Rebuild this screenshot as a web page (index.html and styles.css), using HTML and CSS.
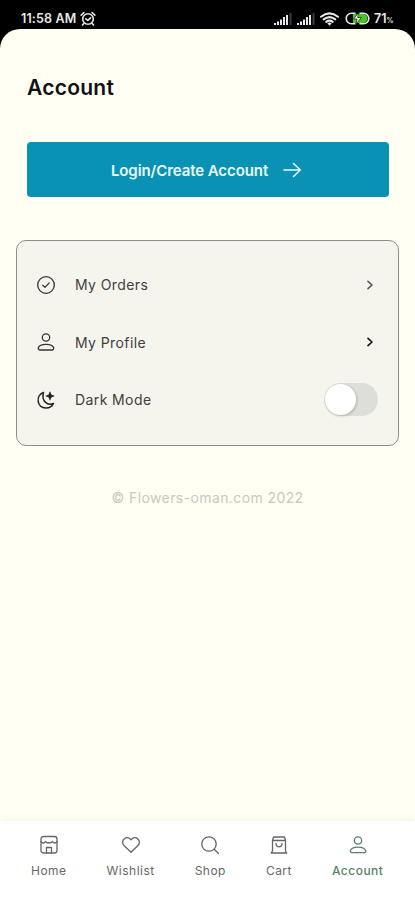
FILE: index.html
```
<!DOCTYPE html>
<html lang="en">
<head>
    <meta charset="UTF-8">
    <meta name="viewport" content="width=device-width, initial-scale=1.0">
    <title>Account</title>
    <link rel="stylesheet" href="styles.css">
</head>
<body>
    <div class="statusbar">
        <span class="time">11:58 AM</span>
        <svg class="alarm" width="16" height="15" viewBox="0 0 16 15">
            <circle cx="8" cy="8" r="5.3"/>
            <path d="M1.2 4.2L4 1.5M14.8 4.2L12 1.5M3.8 12.5L2.5 14M12.2 12.5l1.3 1.5M5.8 7.8L7.8 9.4l2.8-2.6"/>
        </svg>
        <div class="status-icons">
            <svg class="signal" width="19" height="14" viewBox="0 0 19 14">
                <path d="M2 13v-2M5 13V9.500M8 13V7.500M11 13V5M14 13V3"/>
                <path class="dim" d="M17.500 13V1"/>
            </svg>
            <svg class="signal second" width="19" height="14" viewBox="0 0 19 14">
                <path d="M2 13v-2M5 13V9.500M8 13V7.500M11 13V5M14 13V3"/>
                <path class="dim" d="M17.500 13V1"/>
            </svg>
            <svg class="wifi" width="19" height="14" viewBox="0 0 19 14">
                <path d="M1 4.800Q9.500-2 18 4.800M3.700 7.400Q9.500 2.800 15.300 7.400M6.300 9.900Q9.500 7.400 12.700 9.900"/>
                <path class="dot" d="M7.300 11.300Q9.500 9.800 11.700 11.300L9.500 13.700z"/>
            </svg>
            <svg class="battery" width="25" height="13" viewBox="0 0 25 13">
                <path class="charge" d="M8 2h10a4.500 4.500 0 0 1 0 9H8z"/>
                <path d="M10 1.200H6.500a5.300 5.300 0 0 0 0 10.600H10M15 1.200h3.500a5.300 5.300 0 0 1 0 10.600H15"/>
                <path class="bolt" d="M13.500 1L8.500 7h3.500l-1 5 5.500-6.500h-3.500z"/>
            </svg>
            <span class="percent">71<small>%</small></span>
        </div>
    </div>

    <main>
        <h1>Account</h1>
        <button class="login">
            <span>Login/Create Account</span>
            <svg width="19" height="16" viewBox="0 0 19 16"><path d="M1 8h16M10.500 1.500L17.300 8l-6.800 6.500"/></svg>
        </button>

        <div class="menu">
            <div class="row">
                <svg class="icon" viewBox="0 0 20 20"><circle cx="10" cy="10" r="8.300"/><path d="M6.800 10.300l2.200 2.100 4.200-4.500"/></svg>
                <span>My Orders</span>
                <svg class="chevron" width="8" height="10" viewBox="0 0 8 10"><path d="M2 1.300L6 5 2 8.700"/></svg>
            </div>
            <div class="row">
                <svg class="icon" viewBox="0 0 20 20"><circle cx="10" cy="5.500" r="3.700"/><path d="M3.500 18Q2.300 18 2.300 16C3.500 11.200 16.500 11.200 17.700 16Q17.700 18 16.500 18z"/></svg>
                <span>My Profile</span>
                <svg class="chevron dark" width="8" height="10" viewBox="0 0 8 10"><path d="M2 1.300L6 5 2 8.700"/></svg>
            </div>
            <div class="row">
                <svg class="icon moon" viewBox="0 0 20 20"><path d="M7.500 2.500C-.8 5.500.8 18.200 10 18c3.400 0 6.200-1.700 7.500-4.500C11.500 16 5 11 7.500 2.500z"/><path class="star" d="M14 2v8M10 6h8"/><path class="star" d="M14 2.500l1.200 2.300L17.500 6l-2.300 1.200L14 9.500l-1.200-2.300L10.500 6l2.300-1.200z"/></svg>
                <span>Dark Mode</span>
                <div class="switch"><i></i></div>
            </div>
        </div>
        <p class="copyright">© Flowers-oman.com 2022</p>
    </main>

    <nav>
        <a>
            <svg viewBox="0 0 20 20"><rect x="2" y="1.500" width="16" height="16.500" rx="2.500"/><path d="M2 6.500c1 2 3.500 2 4.500 0 1 2 6 2 7 0 1 2 3.500 2 4.500 0M7.500 18v-5.500h5V18"/></svg>
            <span>Home</span>
        </a>
        <a>
            <svg viewBox="0 0 20 20"><path d="M10 17.200L3 10.500C-1.200 6.300 5-.8 10 4.700c5-5.500 11.200 1.600 7 5.800z"/></svg>
            <span>Wishlist</span>
        </a>
        <a>
            <svg viewBox="0 0 20 20"><circle cx="9" cy="9" r="7.200"/><path d="M14.200 14.200l4.300 4.300"/></svg>
            <span>Shop</span>
        </a>
        <a>
            <svg viewBox="0 0 20 20"><path d="M3.500 5.500L4.500 2h11l1 3.500V16l1.300 2H2.200l1.300-2zM3.500 5.500h13M7 8.500c0 4.500 6 4.500 6 0"/></svg>
            <span>Cart</span>
        </a>
        <a class="active">
            <svg viewBox="0 0 20 20"><circle cx="10" cy="5.500" r="3.700"/><path d="M4 17.700Q2.300 17.700 2.300 15.700C4 11 16 11 17.700 15.700Q17.700 17.700 16 17.700z"/></svg>
            <span>Account</span>
        </a>
    </nav>
</body>
</html>
```
FILE: styles.css
```
* {
    box-sizing: border-box;
}
body {
    margin: 0;
    height: 900px;
    display: flex;
    flex-direction: column;
    background: #000;
    font-family: Inter, "Liberation Sans", sans-serif;
    white-space: nowrap;
}
svg {
    display: block;
    flex: none;
    fill: none;
    stroke: currentColor;
    stroke-linecap: round;
    stroke-linejoin: round;
}
.statusbar {
    height: 29px;
    padding: 8px 20px 0 21px;
    display: flex;
    align-items: center;
    color: #e8e8e8;
}
.time {
    width: 59px;
    font-size: 12.5px;
    font-weight: 600;
    letter-spacing: 0.15px;
}
.alarm {
    stroke-width: 1.6;
}
.status-icons {
    margin-left: auto;
    display: flex;
    align-items: center;
}
.signal {
    stroke-width: 2;
    stroke-linecap: butt;
}
.second {
    margin-left: 4px;
}
.dim {
    stroke: #3c3c3c;
}
.wifi {
    margin-left: 5px;
    stroke-width: 2;
}
.dot {
    fill: currentColor;
    stroke: none;
}
.battery {
    margin-left: 6px;
    stroke-width: 1.6;
}
.charge {
    fill: #46c81e;
    stroke: none;
}
.bolt {
    fill: #fff;
    stroke: #17330f;
    stroke-width: 0.8;
}
.percent {
    width: 21px;
    margin-left: 4px;
    font-size: 12.5px;
    font-weight: 600;
}
.percent small {
    font-size: 7px;
}
main {
    flex: 1;
    padding: 45px 16px 0;
    background: #fffff3;
    border-radius: 20px 20px 0 0;
}
h1 {
    margin: 0 0 41px 11px;
    font-size: 21px;
    line-height: 27px;
    font-weight: 600;
    letter-spacing: 0.25px;
    color: #111;
}
.login {
    width: 362px;
    height: 55px;
    margin: 0 0 0 11px;
    padding: 1px 3px 0 0;
    display: flex;
    align-items: center;
    justify-content: center;
    gap: 15px;
    border: 0;
    border-radius: 4px;
    background: #0992b3;
    color: #e9faff;
    font: 600 15px Inter, sans-serif;
    letter-spacing: -0.08px;
}
.login svg {
    stroke-width: 1.6;
}
.menu {
    width: 383px;
    height: 206px;
    margin-top: 43px;
    padding: 15px 20px 0 19px;
    border: 1px solid #8d8e87;
    border-radius: 10px;
    background: #f5f5ee;
}
.row {
    height: 57.500px;
    display: flex;
    align-items: center;
    font-size: 14px;
    letter-spacing: 0.4px;
    color: #40413d;
}
.icon {
    width: 20px;
    height: 20px;
    margin-right: 19px;
    color: #343532;
    stroke-width: 1.3;
}
.moon {
    color: #222;
    stroke-width: 1.5;
}
.star {
    fill: #222;
    stroke-width: 0.7;
}
.chevron {
    margin: 0 4px 0 auto;
    color: #555;
    stroke-width: 1.6;
}
.chevron.dark {
    color: #111;
}
.switch {
    width: 54px;
    height: 33px;
    margin-left: auto;
    padding: 1px;
    border-radius: 17px;
    background: #deded8;
}
.switch i {
    display: block;
    width: 31px;
    height: 31px;
    border-radius: 50%;
    background: #fff;
    box-shadow: 1px 1px 3px rgba(0, 0, 0, 0.2);
}
.copyright {
    margin: 42px 0 0;
    text-align: center;
    font-size: 14px;
    line-height: 20px;
    letter-spacing: 0.4px;
    color: #c9c9c2;
}
nav {
    height: 79px;
    padding: 14px 0 0 31px;
    display: flex;
    gap: 40px;
    background: #fff;
    box-shadow: 0 0 9px rgba(80, 80, 40, 0.08);
}
nav a {
    display: flex;
    flex-direction: column;
    align-items: center;
    color: #666;
    font-size: 12px;
    line-height: 16px;
    letter-spacing: 0.48px;
}
nav svg {
    width: 20px;
    height: 20px;
    margin-bottom: 8px;
    stroke-width: 1.3;
}
nav .active {
    color: #587f68;
    font-weight: 500;
}
```
